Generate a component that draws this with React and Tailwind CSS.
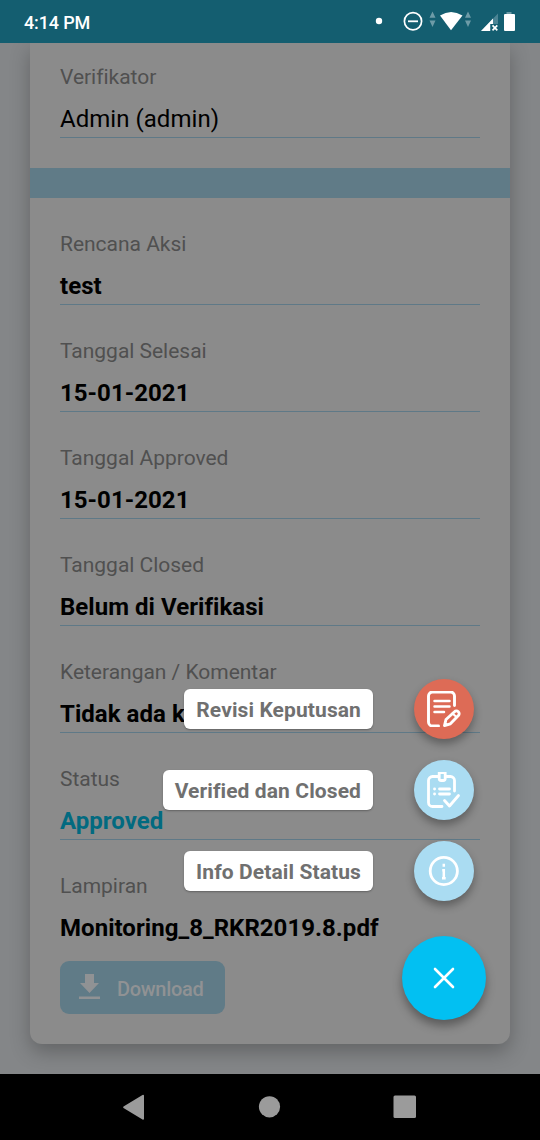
import React from "react";

const fields = [
  { label: "Rencana Aksi", value: "test" },
  { label: "Tanggal Selesai", value: "15-01-2021" },
  { label: "Tanggal Approved", value: "15-01-2021" },
  { label: "Tanggal Closed", value: "Belum di Verifikasi" },
  { label: "Keterangan / Komentar", value: "Tidak ada k" },
  { label: "Status", value: "Approved", tone: "text-[#026a80]" },
];

function Field({ label, value, weight = "font-bold", tone = "text-black" }) {
  return (
    <div className="mb-[30px] border-b border-[#5f7987]">
      <div className="h-8 whitespace-nowrap text-[21px] leading-8 tracking-[-0.02px] text-[#505050]">{label}</div>
      <div className={`mt-2 h-9 whitespace-nowrap text-[24px] leading-9 tracking-[0.04px] ${weight} ${tone}`}>{value}</div>
    </div>
  );
}

function StatusBar() {
  return (
    <header className="relative z-10 flex h-[43px] shrink-0 items-center justify-between bg-[#145e70] pl-6 text-white">
      <span className="mt-0.5 text-[18px] font-medium leading-6 tracking-[-0.15px]">4:14 PM</span>
      <svg className="h-[43px] w-[180px]" viewBox="0 0 180 43" fill="none">
        <circle cx="19" cy="21" r="3.2" fill="#fff" />
        <circle cx="53" cy="21.3" r="8.6" stroke="#fff" strokeWidth="1.7" />
        <path d="M48 21.3h10" stroke="#fff" strokeWidth="1.8" />
        <path d="M69.5 17.7L72.5 11.5L75.5 17.7zM69.5 20.5h6L72.5 27zM105 17.7l3-6.2 3 6.2zM105 20.5h6l-3 6.5z" fill="#6d9ba7" />
        <path d="M80 15.5Q91 8.5 102.500 15.500L91 30.300z" fill="#fff" />
        <path d="M121 31L138 13.500V31z" fill="#4b8494" />
        <path d="M131 31v-7h7v7z" fill="#145e70" />
        <path d="M121 31L133 18.500V24H130V31z" fill="#fff" />
        <path d="M132.500 25.300l4.800 5M137.300 25.300l-4.800 5" stroke="#fff" strokeWidth="1.700" />
        <path d="M146.500 12h5v2h-5z" fill="#6d9ba7" />
        <rect x="144" y="14" width="11" height="17" rx="1" fill="#fff" />
      </svg>
    </header>
  );
}

function NoteEditIcon() {
  return (
    <svg className="size-9" viewBox="0 0 36 36" fill="none" stroke="#fff" strokeWidth="2.9" strokeLinecap="round" strokeLinejoin="round">
      <path d="M12.500 35H6.500a4 4 0 0 1-4-4V5a4 4 0 0 1 4-4h18a4 4 0 0 1 4 4v9.500" />
      <path d="M8.500 10h15M8.500 15.500h15M8.500 21h9.500" strokeWidth="2.500" />
      <path d="M18.500 34.500l1.500-6 8.500-7.700a2.600 2.600 0 0 1 3.900 3.700l-8 8.300z" />
      <path d="M26.500 22.500l4 3.500" strokeWidth="2.200" />
    </svg>
  );
}

function ClipboardCheckIcon() {
  return (
    <svg className="size-9" viewBox="0 0 36 36" fill="none" stroke="#fff" strokeWidth="2.800" strokeLinecap="round" strokeLinejoin="round">
      <path d="M12 4.500H6.500A4 4 0 0 0 2.500 8.500v22A4 4 0 0 0 6.500 34.500h9.500M20.500 4.500h4a4 4 0 0 1 4 4V19" />
      <path d="M13.200.500h6v6a2 2 0 0 1-2 2h-2a2 2 0 0 1-2-2z" />
      <path d="M8.500 17h.1M8.500 22h.1M13.500 17h10M13.500 22h10" />
      <path d="M18.500 28.500l5 5.500 9-10.500" />
    </svg>
  );
}

function InfoIcon() {
  return (
    <svg className="size-9" viewBox="0 0 36 36" fill="none" stroke="#fff" strokeWidth="2.800">
      <circle cx="17.800" cy="18" r="13.600" />
      <path d="M17.800 10.800v3M16.200 17.300h1.600v8M16 25.200h3.700" strokeWidth="2.500" />
    </svg>
  );
}

function Action({ label, color, children }) {
  return (
    <div className="flex h-[60px] items-center justify-end gap-[41px]">
      <span className="flex h-10 items-center whitespace-nowrap rounded-[6px] bg-white px-3 text-[21px] font-bold leading-6 tracking-[0.1px] text-[#707070] shadow-[0_1px_2px_rgba(0,0,0,0.3)]">
        <span className="mt-0.5">{label}</span>
      </span>
      <button className={`flex size-[60px] items-center justify-center rounded-full shadow-[0_5px_9px_rgba(0,0,0,0.32)] ${color}`} aria-label={label}>
        {children}
      </button>
    </div>
  );
}

export default function App() {
  return (
    <div className="relative flex h-[1140px] w-[540px] flex-col overflow-hidden bg-[#848688] font-['Roboto',sans-serif]">
      <StatusBar />
      <main className="flex h-[1031px] shrink-0 flex-col px-[30px]">
        <article className="flex h-[1001px] flex-col rounded-b-[12px] bg-[#8b8b8b] shadow-[0_8px_20px_rgba(0,0,0,0.26)]">
          <section className="px-[30px] pt-[18px]">
            <Field label="Verifikator" value="Admin (admin)" weight="font-normal" />
          </section>
          <div className="h-[30px] bg-[#607b87]" />
          <section className="px-[30px] pt-[30px]">
            {fields.map((field) => (
              <Field key={field.label} {...field} />
            ))}
            <div className="h-8 text-[21px] leading-8 tracking-[-0.02px] text-[#505050]">Lampiran</div>
            <div className="mt-2 h-9 text-[24px] font-bold leading-9 tracking-[0.04px] text-black">Monitoring_8_RKR2019.8.pdf</div>
            <button className="mt-[15px] flex h-[53px] w-[165px] items-center rounded-[9px] bg-[#607b87] pl-[19px] text-[#909294]">
              <svg className="mb-0.5 h-[26px] w-[21px]" viewBox="0 0 21 26" fill="currentColor">
                <path d="M6 0h9v9h5L10.500 19L1 9h5zM0 22.500h21V25H0z" />
              </svg>
              <span className="ml-[17px] mt-0.5 text-[20px] font-medium leading-6 tracking-[-0.3px]">Download</span>
            </button>
          </section>
        </article>
      </main>
      <nav className="relative z-10 h-[66px] shrink-0 bg-black">
        <svg className="h-[66px] w-[540px]" viewBox="0 0 540 66" fill="#9b9b9b">
          <path d="M144 21.500V45a1 1 0 0 1-1.500.500L123.500 34a1 1 0 0 1 0-1.500L142.500 21A1 1 0 0 1 144 21.500z" />
          <circle cx="269.500" cy="32.800" r="10.600" />
          <rect x="393.500" y="21.500" width="22.500" height="22.500" rx="1.500" />
        </svg>
      </nav>
      <aside className="absolute right-[54px] top-[679px] flex w-[340px] flex-col">
        <div className="mr-3 flex flex-col gap-[21px]">
          <Action label="Revisi Keputusan" color="bg-[#dd6b56]"><NoteEditIcon /></Action>
          <Action label="Verified dan Closed" color="bg-[#aadcf2]"><ClipboardCheckIcon /></Action>
          <Action label="Info Detail Status" color="bg-[#aadcf2]"><InfoIcon /></Action>
        </div>
        <button className="mt-[35px] flex size-[84px] items-center justify-center self-end rounded-full bg-[#02c0f2] shadow-[0_6px_10px_rgba(0,0,0,0.35)]" aria-label="Tutup">
          <svg className="size-6" viewBox="0 0 24 24" fill="none" stroke="#fff" strokeWidth="2.600" strokeLinecap="round">
            <path d="M3 3L21 21M21 3L3 21" />
          </svg>
        </button>
      </aside>
    </div>
  );
}
